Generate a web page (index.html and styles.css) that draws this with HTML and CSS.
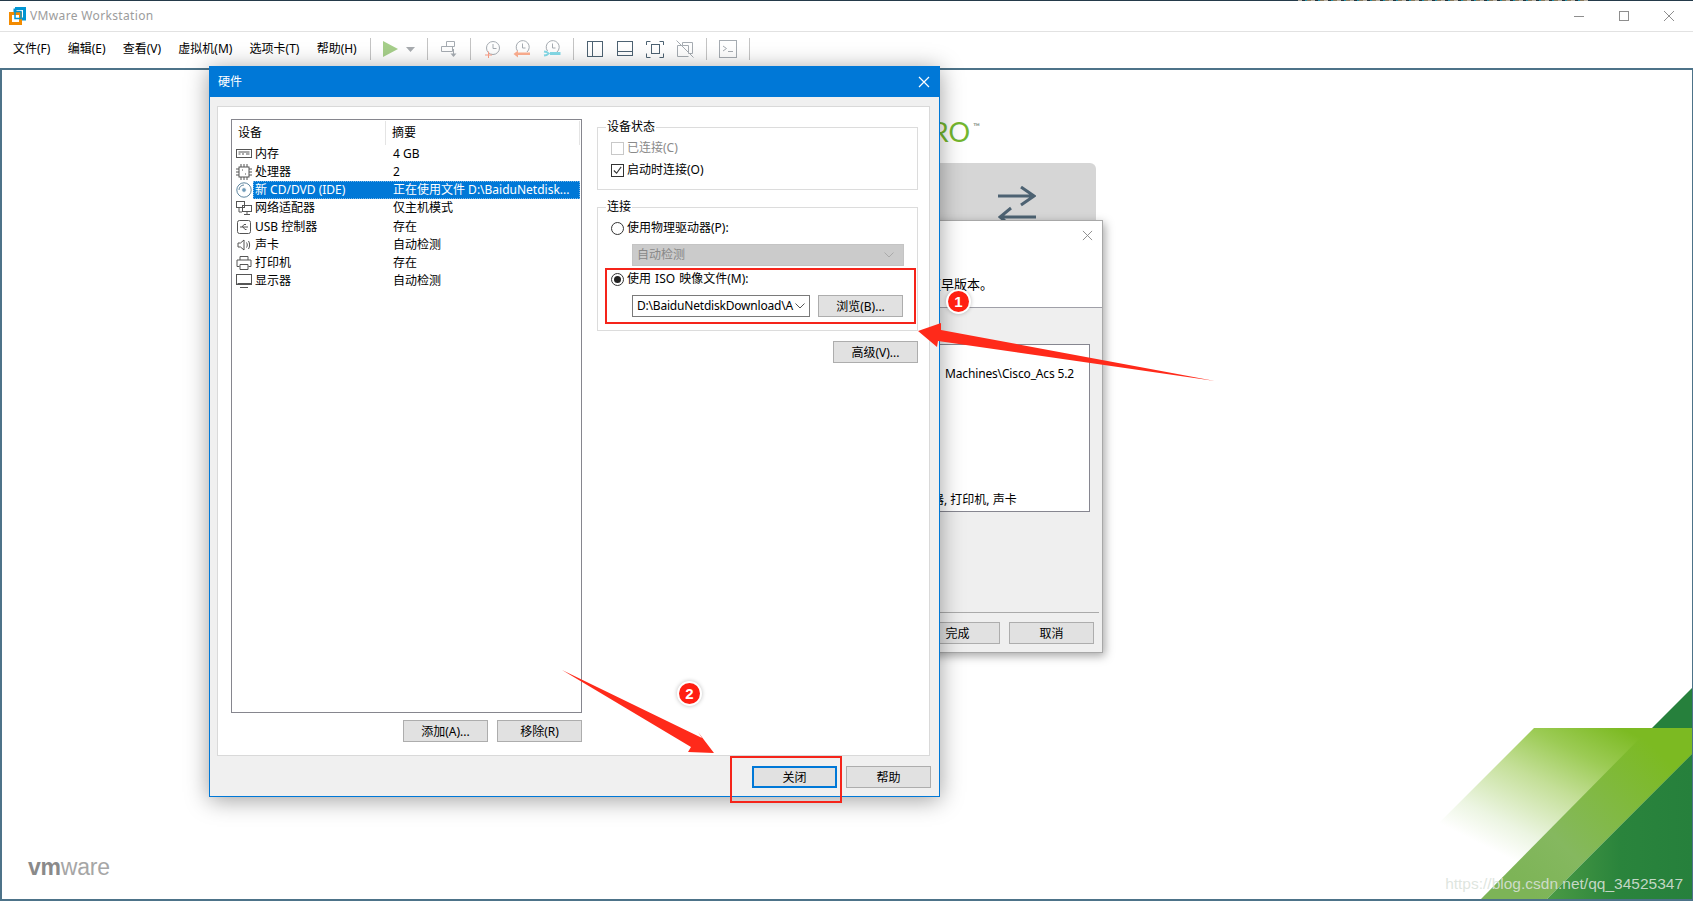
FILE: index.html
```html
<!DOCTYPE html>
<html lang="zh-CN">
<head>
<meta charset="utf-8">
<title>VMware Workstation</title>
<link rel="stylesheet" href="styles.css">
</head>
<body>
<div class="app">
  <div class="top-strip"></div>
  <header class="titlebar">
    <svg class="logo" viewBox="0 0 17 18"><path class="logo-blue" d="M6 1.5h9.500v10.500h-3.500"/><path class="logo-blue" d="M6 1.500v3.500"/><rect class="logo-orange" x="1.500" y="6.500" width="10" height="10"/><rect class="logo-inner" x="6" y="4.500" width="6" height="7"/></svg>
    <span class="app-title">VMware Workstation</span>
    <div class="win-controls">
      <svg viewBox="0 0 12 12"><path d="M1 6.500h10"/></svg>
      <svg viewBox="0 0 12 12"><rect x="1.500" y="1.500" width="9" height="9"/></svg>
      <svg viewBox="0 0 12 12"><path d="M1 1l10 10M11 1L1 11"/></svg>
    </div>
  </header>
  <nav class="toolbar">
    <div class="menu">
      <span>文件(F)</span><span>编辑(E)</span><span>查看(V)</span><span>虚拟机(M)</span><span>选项卡(T)</span><span>帮助(H)</span>
    </div>
    <i class="sep"></i>
    <div class="play">
      <svg class="play-icon" viewBox="0 0 16 18"><path d="M0 1l15 8-15 8z"/></svg>
      <svg class="caret" viewBox="0 0 9 5"><path d="M0 0h9L4.500 5z"/></svg>
    </div>
    <i class="sep"></i>
    <svg class="tool gray" viewBox="0 0 18 18"><path d="M6.500 1.500h8v5h-8zM1.500 6.500h11v5h-11z"/><path d="M13.500 9v5" /><path class="fill" d="M10.500 13.500h6L13.500 17z"/></svg>
    <i class="sep"></i>
    <svg class="tool gray" viewBox="0 0 18 18"><circle cx="10" cy="8" r="6.500"/><path d="M10 4v4.500h3.500"/><path class="plus" d="M2 15h7M5.500 11.500v6.500"/></svg>
    <svg class="tool gray" viewBox="0 0 18 18"><path d="M4.500 11A6.500 6.500 0 1 1 14 12"/><path d="M9.500 3.500v4.500h3"/><path class="back" d="M4 12.500h13v2.500H4z"/><path class="back" d="M5 10.500v7L.5 14z"/></svg>
    <svg class="tool gray" viewBox="0 0 18 18"><path d="M4.500 11A6.500 6.500 0 1 1 14 12"/><path d="M9.500 3.500v4.500h3"/><path class="wrench" d="M7 13.500h10.500"/><path class="wrench-end" d="M1 11.500l2.500.500 2 1.500-2 1.500-2.500.500"/></svg>
    <i class="sep"></i>
    <svg class="tool dark" viewBox="0 0 18 18"><rect x="1.500" y="1.500" width="15" height="15"/><path d="M6.500 1.500v15"/></svg>
    <svg class="tool dark" viewBox="0 0 18 18"><rect x="1.500" y="1.500" width="15" height="14"/><path d="M1.500 11.500h15"/></svg>
    <svg class="tool dark" viewBox="0 0 18 18"><path d="M.5 5V1.500h4M13.500 1.500h4V5M17.500 13.500v4h-4M4.500 17.500h-4v-4"/><rect x="5.500" y="4.500" width="8" height="9"/></svg>
    <svg class="tool gray" viewBox="0 0 18 18"><path d="M1.500 5.500v11h11M6.500 5.500v-3h10v11h-4v-8zM1.500 5.500h5M.5.500l17 17"/></svg>
    <i class="sep"></i>
    <svg class="tool gray" viewBox="0 0 18 18"><rect x=".5" y=".5" width="17" height="17"/><path d="M4 6l3.500 2.500L4 11M9 11.500h5"/></svg>
    <i class="sep"></i>
  </nav>
  <main class="canvas">
    <svg class="corner-art" viewBox="1390 670 301 230">
      <defs>
        <linearGradient id="fadeBand" gradientUnits="userSpaceOnUse" x1="1620" y1="729" x2="1545" y2="878">
          <stop offset="0" stop-color="#7cba22"/><stop offset=".25" stop-color="#9ccb55"/><stop offset=".5" stop-color="#c4df98"/><stop offset=".82" stop-color="#ecf5e2"/><stop offset="1" stop-color="#ffffff"/>
        </linearGradient>
        <linearGradient id="midBand" gradientUnits="userSpaceOnUse" x1="1650" y1="745" x2="1515" y2="880">
          <stop offset="0" stop-color="#7cba22"/><stop offset=".7" stop-color="#85b85f"/><stop offset="1" stop-color="#7db457"/>
        </linearGradient>
        <linearGradient id="deepGreen" gradientUnits="userSpaceOnUse" x1="1691" y1="0" x2="1547" y2="0">
          <stop offset="0" stop-color="#26803c"/><stop offset=".5" stop-color="#2a843c"/><stop offset="1" stop-color="#4a9a44"/>
        </linearGradient>
      </defs>
      <path fill="#26803c" d="M1691 689v41h-41z"/>
      <path fill="url(#fadeBand)" d="M1533 729h158v26l-145 145H1362z"/>
      <path fill="url(#midBand)" d="M1645 733h46v22l-145 145h-66z"/>
      <path fill="url(#deepGreen)" d="M1691 755v145h-145z"/>
    </svg>
    <div class="vmware-mark"><b>vm</b>ware</div>
    <div class="watermark">https://blog.csdn.net/qq_34525347</div>
  </main>

  <div class="edition">WORKSTATION PRO<sup>™</sup></div>
  <div class="home-card">
    <svg viewBox="0 0 38 42"><path d="M0 10h36M23 1l13 9-13 9"/><path d="M38 31H2M13 22L2 31l11 9"/></svg>
  </div>

  <section class="wizard">
    <div class="wizard-head">
      <svg class="wizard-close" viewBox="0 0 12 12"><path d="M1 1l10 10M11 1L1 11"/></svg>
      <p>更早版本。</p>
    </div>
    <div class="wizard-body">
      <div class="summary-box">
        <span class="summary-path">Machines\Cisco_Acs 5.2</span>
        <span class="summary-hw">处理器, 打印机, 声卡</span>
      </div>
    </div>
    <div class="wizard-foot">
      <button class="btn">完成</button>
      <button class="btn">取消</button>
    </div>
  </section>

  <section class="dialog">
    <div class="dialog-title">
      <span>硬件</span>
      <svg viewBox="0 0 12 12"><path d="M1 1l10 10M11 1L1 11"/></svg>
    </div>
    <div class="dialog-panel">
      <div class="devices">
        <div class="device-list">
          <div class="list-head"><span class="col-a">设备</span><span class="col-b">摘要</span></div>

          <div class="row">
            <svg class="dev" viewBox="0 0 16 16"><rect x=".5" y="3.500" width="15" height="8"/><path d="M2.500 6h11M2.500 8h2M6 8h2M10 8h3.500"/></svg>
            <div class="cell"><span class="name">内存</span><span>4 GB</span></div>
          </div>
          <div class="row">
            <svg class="dev" viewBox="0 0 16 16"><rect x="3" y="3" width="10" height="10"/><path d="M0 5h3M0 8h3M0 11h3M13 5h3M13 8h3M13 11h3M5 0v3M8 0v3M11 0v3M5 13v3M8 13v3M11 13v3M6 6h1M9 10h1"/></svg>
            <div class="cell"><span class="name">处理器</span><span>2</span></div>
          </div>
          <div class="row">
            <svg class="dev disc" viewBox="0 0 16 16"><circle cx="8" cy="8" r="7.200"/><circle class="hub" cx="8" cy="8" r="2.400"/><path d="M3 8a5 5 0 0 1 5-5"/></svg>
            <div class="cell selected"><span class="name">新 CD/DVD (IDE)</span><span>正在使用文件 D:\BaiduNetdisk...</span></div>
          </div>
          <div class="row">
            <svg class="dev" viewBox="0 0 16 16"><rect x=".5" y="1.500" width="8" height="6"/><rect x="6.500" y="5.500" width="9" height="6"/><path d="M11 11.500v3M8 14.500h6M3 8v4h3"/></svg>
            <div class="cell"><span class="name">网络适配器</span><span>仅主机模式</span></div>
          </div>
          <div class="row">
            <svg class="dev" viewBox="0 0 16 16"><rect x="1.500" y="1.500" width="13" height="13" rx="2"/><path d="M4 8h8M6 8l2-2.500h2M7 8l2 2.500h1.500"/></svg>
            <div class="cell"><span class="name">USB 控制器</span><span>存在</span></div>
          </div>
          <div class="row">
            <svg class="dev" viewBox="0 0 16 16"><path d="M2 6v4h2.500L8 13V3L4.500 6zM10.500 5.500c1 1.500 1 3.500 0 5M12.500 4c1.500 2.500 1.500 5.500 0 8"/></svg>
            <div class="cell"><span class="name">声卡</span><span>自动检测</span></div>
          </div>
          <div class="row">
            <svg class="dev" viewBox="0 0 16 16"><path d="M4 5V1.500h8V5M3.500 11.500h-2.500v-6.500h14v6.500h-2.500M4 9.500h8v5h-8z"/></svg>
            <div class="cell"><span class="name">打印机</span><span>存在</span></div>
          </div>
          <div class="row">
            <svg class="dev" viewBox="0 0 16 16"><rect x=".5" y="1.500" width="15" height="10"/><path d="M1.500 10.500h14M4 14.500h8"/></svg>
            <div class="cell"><span class="name">显示器</span><span>自动检测</span></div>
          </div>
        </div>
        <div class="device-actions">
          <button class="btn">添加(A)...</button>
          <button class="btn">移除(R)</button>
        </div>
      </div>

      <div class="settings">
        <fieldset class="group group-status">
          <legend>设备状态</legend>
          <label class="opt muted first"><span class="box"></span>已连接(C)</label>
          <label class="opt"><span class="box"><svg viewBox="0 0 12 12"><path d="M2 6l3 3 5-7"/></svg></span>启动时连接(O)</label>
        </fieldset>
        <fieldset class="group group-conn">
          <legend>连接</legend>
          <label class="opt first"><span class="radio"></span>使用物理驱动器(P):</label>
          <div class="select disabled"><span>自动检测</span><svg viewBox="0 0 10 6"><path d="M.5.500L5 5 9.500.500"/></svg></div>
          <label class="opt iso"><span class="radio on"></span>使用 ISO 映像文件(M):</label>
          <div class="iso-row">
            <div class="select"><span class="iso-path">D:\BaiduNetdiskDownload\A</span><svg viewBox="0 0 10 6"><path d="M.5.500L5 5 9.500.500"/></svg></div>
            <button class="btn">浏览(B)...</button>
          </div>
        </fieldset>
        <div class="advanced"><button class="btn">高级(V)...</button></div>
      </div>
    </div>
    <div class="dialog-foot">
      <button class="btn focus">关闭</button>
      <button class="btn">帮助</button>
    </div>
  </section>

  <svg class="arrows" viewBox="0 0 1693 902">
    <path d="M1215 381L941 330l0-7-23 8 19 16 1-6z"/>
    <path d="M562 670l140 68-4-6 16 21-26-1 3-5z"/>
  </svg>
  <div class="callout callout-iso"></div>
  <div class="callout callout-close"></div>
  <div class="badge badge-one">1</div>
  <div class="badge badge-two">2</div>
</div>
</body>
</html>
```

FILE: styles.css
```css
* { box-sizing: border-box; }

html, body { margin: 0; height: 100%; background: #fff; overflow: hidden; }

body {
  font: 12px/16px "Noto Sans", "Noto Sans CJK SC", sans-serif;
  color: #000;
}

svg { display: block; flex: none; }

.app {
  position: relative;
  width: 1693px;
  height: 902px;
  display: flex;
  flex-direction: column;
  overflow: hidden;
}

/* Window chrome */
.top-strip {
  height: 1px;
  flex: none;
  background:
    repeating-linear-gradient(90deg, #b9b1a4 0 4px, #27323a 4px 7px, #1c8ea8 7px 9px, #8a7a5c 9px 13px) 1298px 0 / 290px 1px no-repeat,
    #243a4a;
}

.titlebar {
  height: 31px;
  flex: none;
  display: flex;
  align-items: center;
  padding-left: 9px;
  border-bottom: 1px solid #e2e2e2;
}

.logo { width: 17px; height: 18px; }
.logo path { fill: none; stroke: #0095d3; stroke-width: 3; }
.logo-orange { fill: none; stroke: #f38b00; stroke-width: 3; }
.logo-inner { fill: none; stroke: #0095d3; stroke-width: 1.500; }

.app-title {
  margin-left: 4px;
  font-size: 12px;
  letter-spacing: .35px;
  color: #9c9c9c;
}

.win-controls {
  margin-left: auto;
  padding-right: 18px;
  display: flex;
  gap: 33px;
}
.win-controls svg { width: 12px; height: 12px; }
.win-controls path, .win-controls rect { fill: none; stroke: #8e8e8e; stroke-width: 1; }

.toolbar {
  height: 36px;
  flex: none;
  display: flex;
  align-items: center;
  gap: 12px;
  padding: 0 0 2px 13px;
}

.menu { display: flex; gap: 17.200px; padding-right: 1px; }

.sep { width: 1px; height: 22px; background: #c4c4c4; }

.play { display: flex; align-items: center; gap: 7px; }
.play-icon { width: 16px; height: 18px; }
.play-icon path { fill: #a6cf8a; }
.caret { width: 9px; height: 5px; }
.caret path { fill: #a8acb0; }

.tool { width: 18px; height: 18px; fill: none; stroke-width: 1; }
.tool.gray { stroke: #a6acb2; }
.tool.dark { stroke: #4d6272; }
.tool .fill { fill: #a6acb2; stroke: none; }
.tool .plus { stroke: #ffa088; }
.tool .back { fill: #ffb091; stroke: none; }
.tool .wrench { stroke: #85dbe9; stroke-width: 3; }
.tool .wrench-end { stroke: #85dbe9; stroke-width: 2; }

/* Console canvas */
.canvas {
  position: relative;
  flex: 1;
  margin-bottom: 1px;
  border: 2px solid #4d7389;
  border-width: 2px 1px 2px 2px;
  overflow: hidden;
}

.corner-art {
  position: absolute;
  right: 0;
  bottom: 0;
  width: 301px;
  height: 230px;
}

.vmware-mark {
  position: absolute;
  left: 26px;
  bottom: 20px;
  font: 23px/24px "Liberation Sans", sans-serif;
  letter-spacing: -.2px;
  color: #a6a6a6;
}
.vmware-mark b { color: #8a8a8a; }

.watermark {
  position: absolute;
  right: 9px;
  bottom: 6px;
  font: 15.500px/18px "Liberation Sans", sans-serif;
  color: rgba(218, 226, 218, .88);
}

.edition {
  position: absolute;
  right: 713px;
  top: 116px;
  font: 400 27px/32px Lato, sans-serif;
  color: #74b72f;
  white-space: nowrap;
}
.edition sup { font-size: 9px; font-weight: 700; line-height: 0; vertical-align: 12px; color: #8c9a90; margin-left: 3px; }

.home-card {
  position: absolute;
  left: 860px;
  top: 163px;
  width: 236px;
  height: 150px;
  padding: 23px 0 0 138px;
  background: #d6d6d6;
  border-radius: 6px;
}
.home-card svg { width: 38px; height: 42px; fill: none; stroke: #4d6272; stroke-width: 3; }

/* Buttons and form controls */
.btn {
  width: 85px;
  height: 22px;
  padding: 1px 0 0;
  flex: none;
  font: inherit;
  color: #000;
  background: #e1e1e1;
  border: 1px solid #adadad;
}
.btn.focus { border: 2px solid #0078d7; }

/* Wizard behind the hardware dialog */
.wizard {
  position: absolute;
  left: 700px;
  top: 220px;
  width: 403px;
  height: 433px;
  display: flex;
  flex-direction: column;
  background: #efefef;
  border: 1px solid #a8a8a8;
  box-shadow: 2px 3px 9px rgba(0, 0, 0, .35);
}

.wizard-head {
  position: relative;
  height: 87px;
  flex: none;
  background: #fff;
  border-bottom: 1px solid #a0a0a8;
}
.wizard-head p { margin: 55px 109px 0 0; text-align: right; font-size: 13px; }
.wizard-close {
  position: absolute;
  right: 9px;
  top: 9px;
  width: 11px;
  height: 11px;
  fill: none;
  stroke: #888;
}

.wizard-body { flex: 1; padding-top: 36px; }

.summary-box {
  width: 389px;
  height: 168px;
  display: flex;
  flex-direction: column;
  justify-content: space-between;
  padding: 21px 0 3px;
  background: #fff;
  border: 1px solid #868690;
}
.summary-path { padding-left: 243px; letter-spacing: -.15px; }
.summary-hw { padding-left: 206px; }

.wizard-foot {
  height: 40px;
  flex: none;
  display: flex;
  justify-content: flex-end;
  gap: 9px;
  padding: 9px 5px 0 0;
  margin: 0 3px 0 0;
  border-top: 1px solid #aaa;
}

/* Hardware dialog */
.dialog {
  position: absolute;
  left: 209px;
  top: 66px;
  width: 731px;
  height: 731px;
  display: flex;
  flex-direction: column;
  background: #f0f0f0;
  border: 1px solid #0078d7;
  box-shadow: 0 3px 22px rgba(0, 0, 0, .38);
}

.dialog-title {
  height: 30px;
  flex: none;
  display: flex;
  align-items: center;
  justify-content: space-between;
  padding: 0 9px 0 8px;
  color: #fff;
  background: #0078d7;
}
.dialog-title svg { width: 12px; height: 12px; fill: none; stroke: #fff; stroke-width: 1.200; }

.dialog-panel {
  height: 650px;
  flex: none;
  display: flex;
  gap: 15px;
  margin: 9px 9px 0 7px;
  padding: 12px 0 0 13px;
  background: #fff;
  border: 1px solid #d9d9d9;
}

.devices { width: 351px; flex: none; }

.device-list {
  height: 594px;
  background: #fff;
  border: 1px solid #86868e;
}

.list-head {
  position: relative;
  height: 25px;
  display: flex;
  align-items: center;
}
.col-a { width: 154px; padding-left: 6px; border-right: 1px solid #e4e4e4; height: 24px; line-height: 24px; }
.col-b { flex: 1; padding-left: 6px; height: 24px; line-height: 24px; border-right: 1px solid #e4e4e4; margin-right: 1px; }

.row { display: flex; align-items: center; height: 18.150px; padding-left: 4px; }

.dev {
  width: 16px;
  height: 16px;
  fill: none;
  stroke: #555;
  stroke-width: 1;
}
.dev.disc { stroke: #5f86a0; }
.dev .hub { fill: #6f9ab8; stroke: #fff; }

.cell {
  flex: 1;
  display: flex;
  align-items: center;
  height: 18px;
  margin: 0 1px 0 1px;
  padding-left: 2px;
}
.cell .name { width: 138px; }
.cell.selected { color: #fff; background: #0078d7; outline: 1px dotted #7ab8ea; outline-offset: -1px; }

.settings { width: 321px; flex: none; }

.group {
  margin: 0;
  padding: 0;
  min-width: 0;
  border: 1px solid #dcdcdc;
}
.group legend { margin-left: 8px; padding: 0 1px; line-height: 16px; }
.group-status { padding-bottom: 11px; }
.group-conn { margin-top: 9px; padding-bottom: 13px; }

.opt { display: flex; align-items: center; height: 16px; margin: 6px 0 0 13px; gap: 3px; }
.opt.first { margin-top: 5px; }
.opt.muted { color: #8a8a8a; }
.opt.iso { margin-top: 5px; word-spacing: 1px; }

.box {
  width: 13px;
  height: 13px;
  flex: none;
  background: #fff;
  border: 1px solid #333;
}
.box svg { width: 11px; height: 11px; fill: none; stroke: #333; stroke-width: 1.200; }
.muted .box { border-color: #c8c8c8; }

.radio {
  width: 13px;
  height: 13px;
  flex: none;
  border: 1px solid #333;
  border-radius: 50%;
  background: #fff;
  display: flex;
  align-items: center;
  justify-content: center;
}
.radio.on::after {
  content: "";
  width: 7px;
  height: 7px;
  border-radius: 50%;
  background: #222;
}

.select {
  width: 178px;
  height: 22px;
  display: flex;
  align-items: center;
  justify-content: space-between;
  padding: 0 6px 0 4px;
  background: #fff;
  border: 1px solid #7a7a7a;
  white-space: nowrap;
  overflow: hidden;
}
.iso-path { letter-spacing: -.2px; }
.select svg { width: 10px; height: 6px; fill: none; stroke: #555; margin-left: 2px; }
.select.disabled {
  width: 272px;
  margin: 8px 0 0 34px;
  padding-right: 9px;
  color: #888;
  background: #cbcbcb;
  border-color: #c4c4c4;
}
.select.disabled svg { stroke: #aaa; }

.iso-row { display: flex; gap: 8px; margin: 8px 0 0 34px; }

.advanced { display: flex; justify-content: flex-end; margin-top: 10px; }

.device-actions {
  display: flex;
  justify-content: flex-end;
  gap: 9px;
  margin-top: 7px;
}

.dialog-foot {
  flex: 1;
  display: flex;
  justify-content: flex-end;
  gap: 9px;
  padding: 10px 8px 0 0;
}

/* Annotations drawn over the screen */
.arrows {
  position: absolute;
  left: 0;
  top: 0;
  width: 1693px;
  height: 902px;
  pointer-events: none;
}
.arrows path { fill: #ff2a1a; }

.callout { position: absolute; border: 2px solid #f5241a; }
.callout-iso { left: 605px; top: 268px; width: 311px; height: 56px; }
.callout-close { left: 730px; top: 756px; width: 112px; height: 47px; }

.badge {
  position: absolute;
  width: 21px;
  height: 21px;
  border-radius: 50%;
  background: #ff1f12;
  color: #fff;
  font: 700 15px/21px "Liberation Sans", sans-serif;
  text-align: center;
  box-shadow: 0 0 0 2px #fff, 0 0 4px 2px rgba(0, 0, 0, .25);
}
.badge-one { left: 948px; top: 291px; }
.badge-two { left: 679px; top: 683px; }
```
